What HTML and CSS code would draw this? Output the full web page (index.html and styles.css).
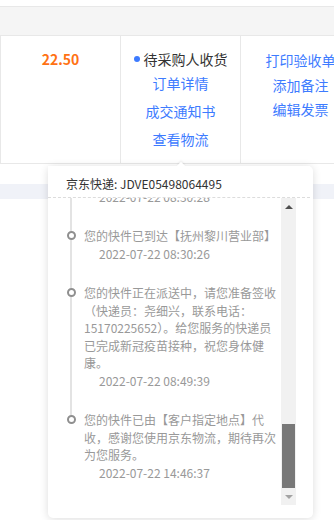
FILE: index.html
```html
<!DOCTYPE html>
<html lang="zh-CN">
<head>
<meta charset="utf-8">
<title>订单物流</title>
<link rel="stylesheet" href="styles.css">
</head>
<body>
<div class="page">
  <div class="top-gap"></div>
  <div class="thead"></div>
  <div class="trow">
    <div class="cell cell-price"><span class="price">22.50</span></div>
    <div class="cell cell-status">
      <div class="status"><span class="dot"></span>待采购人收货</div>
      <a class="link">订单详情</a>
      <a class="link">成交通知书</a>
      <a class="link">查看物流</a>
    </div>
    <div class="cell cell-ops">
      <a class="link">打印验收单</a>
      <a class="link">添加备注</a>
      <a class="link">编辑发票</a>
    </div>
  </div>
  <div class="spacer"></div>
  <div class="band"></div>

  <div class="popup">
    <span class="arrow"></span>
    <div class="popup-head">京东快递: JDVE05498064495</div>
    <div class="popup-body">
      <div class="viewport">
        <ul class="timeline">
          <li class="item">
            <div class="rail"><span class="seg"></span><span class="node"></span><span class="line"></span></div>
            <div class="content">
              <p class="msg">您的快件已从【南昌转运中心】发出</p>
              <p class="time">2022-07-22 08:30:28</p>
            </div>
          </li>
          <li class="item">
            <div class="rail"><span class="seg"></span><span class="node"></span><span class="line"></span></div>
            <div class="content">
              <p class="msg">您的快件已到达【抚州黎川营业部】</p>
              <p class="time">2022-07-22 08:30:26</p>
            </div>
          </li>
          <li class="item">
            <div class="rail"><span class="seg"></span><span class="node"></span><span class="line"></span></div>
            <div class="content">
              <p class="msg">您的快件正在派送中，请您准备签收（快递员：尧细兴，联系电话：15170225652）。给您服务的快递员已完成新冠疫苗接种，祝您身体健康。</p>
              <p class="time">2022-07-22 08:49:39</p>
            </div>
          </li>
          <li class="item last">
            <div class="rail"><span class="seg"></span><span class="node"></span><span class="line"></span></div>
            <div class="content">
              <p class="msg">您的快件已由【客户指定地点】代收，感谢您使用京东物流，期待再次为您服务。</p>
              <p class="time">2022-07-22 14:46:37</p>
            </div>
          </li>
        </ul>
      </div>
      <div class="scrollbar">
        <div class="sb-btn"><span class="tri-up"></span></div>
        <div class="sb-track"><div class="sb-thumb"></div></div>
        <div class="sb-btn"><span class="tri-down"></span></div>
      </div>
    </div>
  </div>
</div>
</body>
</html>
```
FILE: styles.css
```css
html, body {
  margin: 0;
  padding: 0;
  background: #fff;
  overflow: hidden;
}
body {
  width: 334px;
  height: 520px;
  font-family: "Noto Sans CJK SC", "Noto Sans", sans-serif;
  color: #333;
}
.page {
  position: relative;
  width: 334px;
  height: 520px;
  overflow: hidden;
}
.top-gap {
  height: 6px;
  border-bottom: 1px solid #e8e8e8;
}
.thead {
  height: 28px;
  background: #f5f5f5;
  border-bottom: 1px solid #e8e8e8;
}
.trow {
  display: grid;
  grid-template-columns: 121px 120px 120px;
  height: 127px;
  border-bottom: 1px solid #e8e8e8;
  width: 361px;
}
.cell {
  display: flex;
  flex-direction: column;
  align-items: center;
  border-right: 1px solid #e8e8e8;
  font-size: 14px;
}
.cell-price {
  border-left: 1px solid #e8e8e8;
  padding-top: 13px;
}
.price {
  color: #ff7214;
  font-weight: 700;
  line-height: 20px;
}
.cell-status {
  padding-top: 13px;
}
.status {
  display: flex;
  align-items: center;
  line-height: 20px;
  color: #333;
}
.dot {
  width: 6px;
  height: 6px;
  border-radius: 50%;
  background: #3d7bff;
  margin-right: 4px;
}
.link {
  color: #3d7bff;
  cursor: pointer;
  text-decoration: none;
}
.cell-status .link {
  line-height: 28px;
}
.cell-ops {
  padding-top: 12px;
}
.cell-ops .link {
  line-height: 24.5px;
  white-space: nowrap;
}
.spacer {
  height: 20px;
}
.band {
  height: 15px;
  background: #f0f2f8;
}

/* popup */
.popup {
  position: absolute;
  left: 48px;
  top: 166px;
  width: 265px;
  height: 352px;
  box-sizing: border-box;
  background: #fff;
  border-radius: 5px;
  box-shadow: 0 1px 8px rgba(0, 0, 0, 0.14);
  display: flex;
  flex-direction: column;
}
.arrow {
  position: absolute;
  left: 130px;
  top: -3px;
  width: 6px;
  height: 6px;
  background: #fff;
  transform: rotate(45deg);
  box-shadow: -1px -1px 2px rgba(0, 0, 0, 0.06);
}
.popup-head {
  height: 32px;
  box-sizing: border-box;
  padding: 9px 0 0 18px;
  font-size: 12px;
  line-height: 18px;
  color: #333;
  border-bottom: 1px dashed #dcdcdc;
  margin-right: 3px;
  position: relative;
  background: #fff;
}
.popup-body {
  display: flex;
  height: 307px;
  margin-bottom: 12px;
}
.viewport {
  flex: 0 0 233px;
  overflow: hidden;
  box-sizing: border-box;
  padding-left: 18px;
}
.timeline {
  list-style: none;
  margin: -28px 0 0;
  padding: 0;
}
.item {
  display: flex;
  gap: 8px;
}
.rail {
  flex: 0 0 10px;
  display: flex;
  flex-direction: column;
  align-items: center;
}
.seg {
  width: 2px;
  height: 4px;
  background: #e3e3e3;
}
.node {
  width: 9px;
  height: 9px;
  box-sizing: border-box;
  border: 2px solid #8f8f8f;
  border-radius: 50%;
  background: #fff;
  flex: none;
}
.line {
  flex: 1;
  width: 2px;
  background: #e3e3e3;
}
.item.last .line {
  display: none;
}
.content {
  flex: 0 0 197px;
  padding-bottom: 22px;
  font-size: 12px;
  line-height: 17.5px;
  color: #999;
}
.msg, .time {
  margin: 0;
}
.time {
  padding-left: 15px;
}

/* scrollbar */
.scrollbar {
  flex: 0 0 15px;
  display: flex;
  flex-direction: column;
  background: #f1f1f1;
}
.sb-btn {
  height: 17px;
  display: flex;
  align-items: center;
  justify-content: center;
}
.tri-up {
  width: 0;
  height: 0;
  border-left: 4px solid transparent;
  border-right: 4px solid transparent;
  border-bottom: 4px solid #505050;
}
.tri-down {
  width: 0;
  height: 0;
  border-left: 4px solid transparent;
  border-right: 4px solid transparent;
  border-top: 4px solid #a3a3a3;
}
.sb-track {
  flex: 1;
  display: flex;
  flex-direction: column;
  align-items: center;
}
.sb-thumb {
  margin-top: auto;
  width: 13px;
  height: 64px;
  background: #787878;
}
```
